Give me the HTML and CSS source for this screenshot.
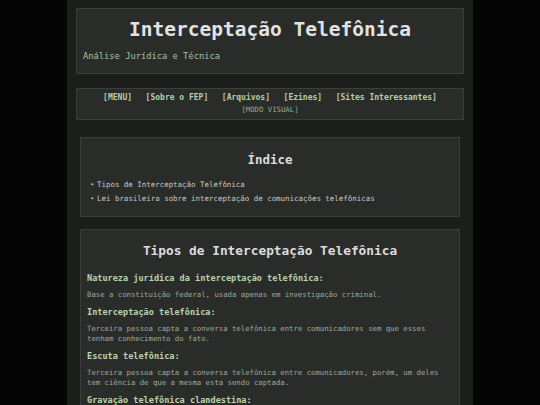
FILE: index.html
```html
<!DOCTYPE html>
<html lang="pt-BR">
<head>
<meta charset="utf-8">
<title>Interceptação Telefônica</title>
<link rel="stylesheet" href="styles.css">
</head>
<body>
<div class="page">
  <header class="header">
    <h1 class="title">Interceptação Telefônica</h1>
    <p class="subtitle">Análise Jurídica e Técnica</p>
  </header>
  <nav class="nav">
    <div class="nav-links">
      <a class="nav-link">[MENU]</a>
      <a class="nav-link">[Sobre o FEP]</a>
      <a class="nav-link">[Arquivos]</a>
      <a class="nav-link">[Ezines]</a>
      <a class="nav-link">[Sites Interessantes]</a>
    </div>
    <div class="nav-mode">[MODO VISUAL]</div>
  </nav>
  <main class="main">
    <section class="box index">
      <h2 class="index-title">Índice</h2>
      <ul class="index-list">
        <li>Tipos de Interceptação Telefônica</li>
        <li>Lei brasileira sobre interceptação de comunicações telefônicas</li>
      </ul>
    </section>
    <section class="box content">
      <h2 class="section-title">Tipos de Interceptação Telefônica</h2>
      <h3 class="term">Natureza jurídica da interceptação telefônica:</h3>
      <p class="text">Base a constituição federal, usada apenas em investigação criminal.</p>
      <h3 class="term">Interceptação telefônica:</h3>
      <p class="text">Terceira pessoa capta a conversa telefônica entre comunicadores sem que esses tenham conhecimento do fato.</p>
      <h3 class="term">Escuta telefônica:</h3>
      <p class="text">Terceira pessoa capta a conversa telefônica entre comunicadores, porém, um deles tem ciência de que a mesma esta sendo captada.</p>
      <h3 class="term">Gravação telefônica clandestina:</h3>
      <p class="text">Um dos comunicadores grava a conversa sem o conhecimento do outro.</p>
    </section>
  </main>
</div>
</body>
</html>
```
FILE: styles.css
```css
html, body {
  margin: 0;
  padding: 0;
  background: #050505;
  font-family: "DejaVu Sans Mono", "Liberation Mono", monospace;
}
.page {
  width: 388px;
  margin: 0 auto;
  padding: 8px 9px;
  background: #1c1e1c;
  min-height: 100vh;
}
.header {
  background: #2a2c2a;
  border: 1px solid #3c3e3c;
  padding: 9px 6px 11px;
}
.title {
  margin: 0;
  text-align: center;
  font-size: 19.5px;
  line-height: 24px;
  font-weight: bold;
  color: #e2e2e2;
}
.subtitle {
  margin: 8px 0 0;
  font-size: 8.75px;
  line-height: 12px;
  color: #a3c4a0;
}
.nav {
  margin-top: 14px;
  background: #2a2c2a;
  border: 1px solid #3c3e3c;
  padding: 3px 6px;
  text-align: center;
}
.nav-links {
  display: flex;
  justify-content: center;
  gap: 13.6px;
  font-size: 8px;
  line-height: 12px;
  font-weight: bold;
}
.nav-link {
  color: #b5cdb0;
}
.nav-mode {
  font-size: 7.3px;
  line-height: 12px;
  color: #9aab98;
}
.main {
  margin-top: 17px;
  padding: 0 4px;
  display: flex;
  flex-direction: column;
  gap: 12px;
}
.box {
  background: #2a2c2a;
  border: 1px solid #3c3e3c;
  padding: 13px 6px 10px;
}
.index {
  padding: 14px 8px 10px;
}
.index-title {
  margin: 0;
  text-align: center;
  font-size: 12.5px;
  line-height: 16px;
  font-weight: bold;
  color: #dcdcdc;
}
.index-list {
  margin: 10px 0 0;
  padding-left: 8px;
  list-style: none;
  font-size: 7.45px;
  line-height: 14px;
  color: #c6c8c4;
}
.index-list li::before {
  content: "•";
  display: inline-block;
  width: 7px;
  margin-left: -7px;
  color: #a9b4a6;
}
.section-title {
  margin: 0 0 13px;
  text-align: center;
  font-size: 12.8px;
  line-height: 16px;
  font-weight: bold;
  color: #dcdcdc;
}
.term {
  margin: 6px 0;
  font-size: 8.55px;
  line-height: 12px;
  font-weight: bold;
  color: #b8d6ac;
}
.section-title + .term {
  margin-top: 13px;
}
.text {
  margin: 6px 0;
  font-size: 7.3px;
  line-height: 10px;
  color: #9eab9b;
}
```
